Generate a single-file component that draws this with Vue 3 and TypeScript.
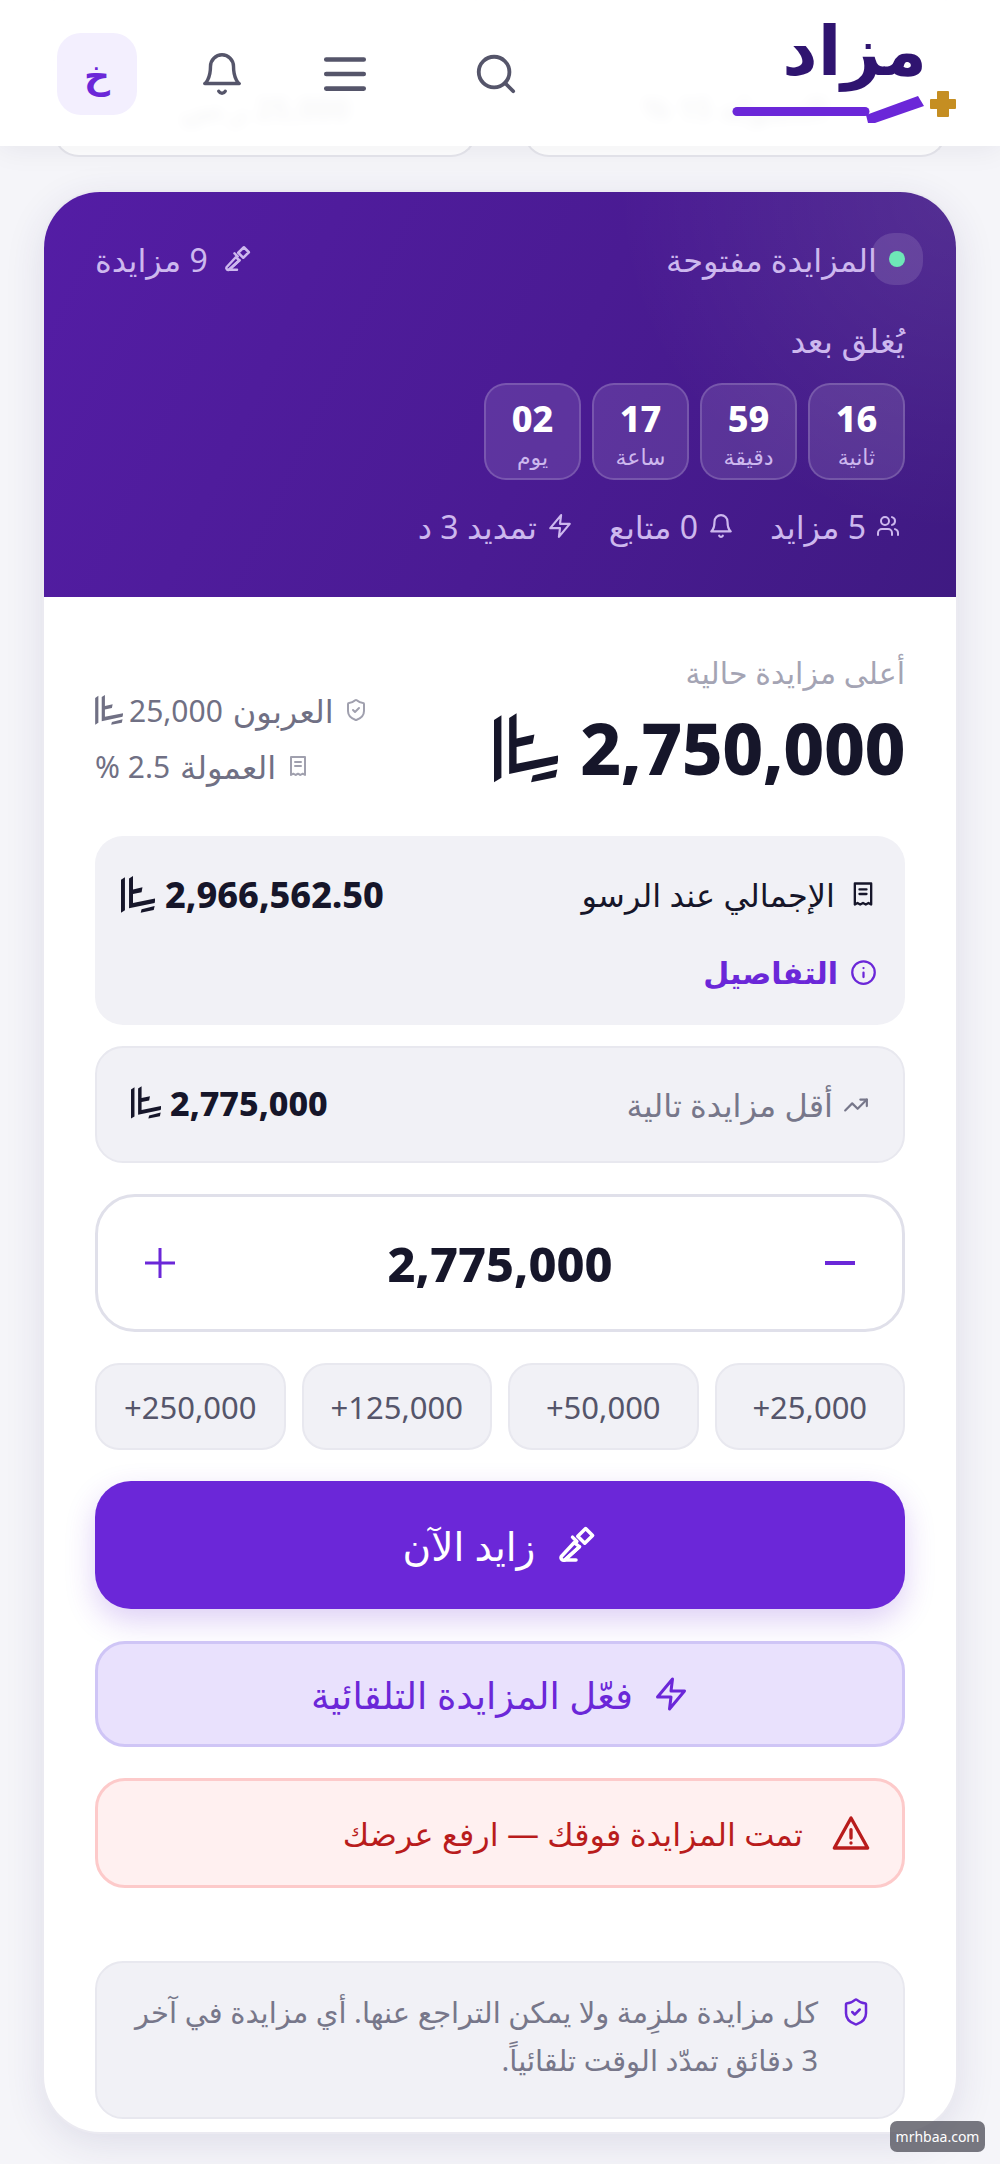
<script setup lang="ts">
const timers = [
  { v: '16', l: 'ثانية' },
  { v: '59', l: 'دقيقة' },
  { v: '17', l: 'ساعة' },
  { v: '02', l: 'يوم' },
]
const chips = ['+25,000', '+50,000', '+125,000', '+250,000']
</script>

<template>
  <div class="page" dir="rtl">
    <svg width="0" height="0" class="defs" aria-hidden="true">
      <symbol id="riyal" viewBox="30 30 190 206">
        <path d="M52 36 30 50v185l22-14z" />
        <path d="M97 30 75 44v166l143-30 5-25-126 25v-50l48-10 5-27-53 12z" />
        <path d="M145 215l73-18-5 23-73 15z" />
      </symbol>
      <symbol id="gavel" viewBox="0 0 24 24">
        <path d="m14 13-8.4 7.6H12" />
        <path d="M5.6 20.6c-1.400.4-2.600-.7-2-2L11 10.600l3 2.400z" />
        <path d="M12.500 10 10 7.500" />
        <path d="m17.500 2.600 4 4-4.500 4.400-4-4z" />
      </symbol>
      <symbol id="bell" viewBox="0 0 24 24">
        <path d="M6 8a6 6 0 0 1 12 0c0 7 3 9 3 9H3s3-2 3-9" />
        <path d="M10.300 21a1.940 1.940 0 0 0 3.400 0" />
      </symbol>
      <symbol id="zap" viewBox="0 0 24 24"><path d="M13 2 3 14h9l-1 8 10-12h-9l1-8z" /></symbol>
      <symbol id="receipt" viewBox="0 0 24 24">
        <path d="M5 3h14v18l-2.300-1.300-2.300 1.300-2.400-1.300-2.400 1.300-2.300-1.300L5 21z" />
        <path d="M9 8h6M9 12h6" />
      </symbol>
      <symbol id="shield" viewBox="0 0 24 24">
        <path d="M20 13c0 5-3.500 7.500-7.660 8.950a1 1 0 0 1-.67-.01C7.500 20.500 4 18 4 13V6a1 1 0 0 1 1-1c2 0 4.500-1.200 6.240-2.720a1.170 1.170 0 0 1 1.520 0C14.510 3.810 17 5 19 5a1 1 0 0 1 1 1z" />
        <path d="m9 12 2 2 4-4" />
      </symbol>
    </svg>

    <div class="under">
      <div class="under-card"><span>العمولة 15 %</span></div>
      <div class="under-card"><span>25,000 ر.س</span></div>
    </div>

    <header class="top">
      <div class="logo">
        <span class="logo-word">مزاد</span>
        <svg class="logo-mark" width="230" height="38" viewBox="730 88 230 38">
          <path d="M737 111.500h128" stroke="#6b27d8" stroke-width="9" stroke-linecap="round" />
          <path d="M866 115l52-19 6 10-49 17h-7z" fill="#6b27d8" />
          <path d="M938 92h10v8h7v8h-7v8h-10v-8h-7v-8h7z" fill="#c58e22" stroke="#c58e22" stroke-linejoin="round" stroke-width="2" />
        </svg>
      </div>
      <div class="top-actions">
        <svg class="ico search" viewBox="0 0 24 24"><circle cx="11" cy="11" r="8" /><path d="m21 21-4.300-4.300" /></svg>
        <svg class="ico menu" viewBox="0 0 24 24"><path d="M3 5h18M3 12h18M3 19h18" /></svg>
        <svg class="ico bell-top"><use href="#bell" /></svg>
        <div class="avatar">خ</div>
      </div>
    </header>

    <main class="card">
      <section class="hero">
        <div class="hero-top">
          <span class="live"><i class="dot"></i>المزايدة مفتوحة</span>
          <span class="count"><svg class="ico s30"><use href="#gavel" /></svg>9 مزايدة</span>
        </div>
        <div class="closes">يُغلق بعد</div>
        <div class="timers">
          <div v-for="t in timers" :key="t.l" class="timer">
            <b>{{ t.v }}</b>
            <span>{{ t.l }}</span>
          </div>
        </div>
        <div class="stats">
          <span>
            <svg class="ico s24" viewBox="0 0 24 24"><path d="M16 21v-2a4 4 0 0 0-4-4H6a4 4 0 0 0-4 4v2" /><circle cx="9" cy="7" r="4" /><path d="M22 21v-2a4 4 0 0 0-3-3.870" /><path d="M16 3.130a4 4 0 0 1 0 7.750" /></svg>
            5 مزايد
          </span>
          <span><svg class="ico s26"><use href="#bell" /></svg>0 متابع</span>
          <span><svg class="ico s26"><use href="#zap" /></svg>تمديد 3 د</span>
        </div>
      </section>

      <section class="body">
        <div class="price-row">
          <div class="price-main">
            <div class="price-label">أعلى مزايدة حالية</div>
            <div class="price">
              <span>2,750,000</span>
              <svg class="riyal r-big"><use href="#riyal" /></svg>
            </div>
          </div>
          <div class="price-side">
            <div class="side-line">
              <svg class="ico s24 pale"><use href="#shield" /></svg>
              <span class="side-label">العربون</span>
              <span class="num">25,000</span>
              <svg class="riyal r-side"><use href="#riyal" /></svg>
            </div>
            <div class="side-line">
              <svg class="ico s24 pale"><use href="#receipt" /></svg>
              <span class="side-label">العمولة</span>
              <span class="num">2.5 %</span>
            </div>
          </div>
        </div>

        <div class="total">
          <div class="total-row">
            <span class="total-label"><svg class="ico s28"><use href="#receipt" /></svg>الإجمالي عند الرسو</span>
            <span class="total-val">2,966,562.50<svg class="riyal r-mid"><use href="#riyal" /></svg></span>
          </div>
          <div class="details">
            <svg class="ico s27" viewBox="0 0 24 24"><circle cx="12" cy="12" r="10" /><path d="M12 16v-4M12 8h.01" /></svg>
            التفاصيل
          </div>
        </div>

        <div class="next">
          <span class="next-label">
            <svg class="ico s26" viewBox="0 0 24 24"><path d="M22 7l-8.500 8.500-5-5L2 17" /><path d="M16 7h6v6" /></svg>
            أقل مزايدة تالية
          </span>
          <span class="next-val">2,775,000<svg class="riyal r-next"><use href="#riyal" /></svg></span>
        </div>

        <div class="stepper">
          <svg class="ico step minus" viewBox="0 0 32 32"><path d="M1 16h30" /></svg>
          <b>2,775,000</b>
          <svg class="ico step" viewBox="0 0 32 32"><path d="M1 16h30M16 1v30" /></svg>
        </div>

        <div class="chips">
          <div v-for="c in chips" :key="c" class="chip" dir="ltr">{{ c }}</div>
        </div>

        <div class="bid"><svg class="ico s42"><use href="#gavel" /></svg>زايد الآن</div>

        <div class="auto"><svg class="ico s36"><use href="#zap" /></svg>فعّل المزايدة التلقائية</div>

        <div class="alert">
          <svg class="ico s40" viewBox="0 0 24 24"><path d="M12 3 2 21h20z" /><path d="M12 10v5M12 18h.01" /></svg>
          تمت المزايدة فوقك — ارفع عرضك
        </div>

        <div class="note">
          <svg class="ico s30"><use href="#shield" /></svg>
          <p>كل مزايدة ملزِمة ولا يمكن التراجع عنها. أي مزايدة في آخر 3 دقائق تمدّد الوقت تلقائياً.</p>
        </div>
      </section>
    </main>

    <div class="mark" dir="ltr">mrhbaa.com</div>
  </div>
</template>

<style>
html, body { margin: 0; background: #f5f5f9; }
</style>

<style scoped>
.page {
  position: relative;
  width: 1000px;
  height: 2164px;
  overflow: hidden;
  background: #f5f5f9;
  font-family: "Noto Sans", "DejaVu Sans", sans-serif;
  color: #16162a;
}
.defs { position: absolute; }
.ico {
  fill: none;
  stroke: currentColor;
  stroke-width: 2;
  stroke-linecap: round;
  stroke-linejoin: round;
  flex: none;
}
.riyal { fill: currentColor; flex: none; }

.under {
  display: flex;
  gap: 46px;
  height: 157px;
  padding: 0 53px;
  box-sizing: border-box;
}
.under-card {
  flex: 1;
  background: #fff;
  border: 2px solid #e6e6ec;
  border-top: 0;
  border-radius: 0 0 26px 26px;
  display: flex;
  justify-content: center;
  padding-top: 88px;
  font-size: 30px;
  font-weight: 700;
  color: #6f6f80;
  box-sizing: border-box;
}
.top {
  position: absolute;
  inset: 0 0 auto 0;
  height: 146px;
  display: flex;
  justify-content: space-between;
  box-sizing: border-box;
  background: rgba(255, 255, 255, 0.94);
  backdrop-filter: blur(6px);
  box-shadow: 0 2px 28px rgba(30, 30, 60, 0.07);
}
.logo {
  position: relative;
  width: 270px;
  margin-right: 40px;
}
.logo-word {
  position: absolute;
  top: 13px;
  right: 33px;
  font-size: 69px;
  font-weight: 700;
  line-height: 70px;
  color: #2f1470;
}
.logo-mark {
  position: absolute;
  top: 88px;
  right: 0;
}
.top-actions {
  display: flex;
  align-items: center;
  margin-left: 57px;
  color: #55556a;
  height: 148px;
}
.search { width: 46px; height: 46px; margin-left: 103px; stroke-width: 2; }
.menu { width: 50px; height: 50px; margin-left: 75px; stroke-width: 2.200; }
.bell-top { width: 46px; height: 46px; margin-left: 62px; stroke-width: 1.800; }
.avatar {
  width: 80px;
  height: 82px;
  border-radius: 24px;
  background: #f3effe;
  color: #6b27d8;
  font-size: 36px;
  font-weight: 700;
  display: flex;
  align-items: center;
  justify-content: center;
}

.card {
  width: 912px;
  margin: 35px auto 0;
  height: 1940px;
  background: #fff;
  border-radius: 56px;
  overflow: hidden;
  box-shadow: 0 0 0 2px #ebeaf1, 0 10px 40px rgba(50, 40, 110, 0.12);
}
.hero {
  height: 405px;
  box-sizing: border-box;
  padding: 50px 51px 0;
  color: #cdb8ee;
  background:
    radial-gradient(circle at 100% 0, rgba(255, 255, 255, 0.09), transparent 340px),
    linear-gradient(115deg, #541da5, #4a1b93 55%, #3f1a82);
}
.hero-top {
  display: flex;
  justify-content: space-between;
  align-items: center;
  height: 34px;
  font-size: 32px;
}
.live, .count, .stats span { display: flex; align-items: center; }
.live { gap: 12px; }
.count { gap: 14px; }
.dot {
  width: 16px;
  height: 16px;
  border-radius: 50%;
  background: #6ee7b7;
  box-shadow: 0 0 0 18px rgba(255, 255, 255, 0.12);
}
.closes {
  margin-top: 48px;
  height: 34px;
  line-height: 34px;
  font-size: 33px;
}
.timers {
  display: flex;
  gap: 11px;
  margin-top: 25px;
}
.timer {
  width: 97px;
  height: 97px;
  box-sizing: border-box;
  border-radius: 22px;
  border: 2px solid rgba(255, 255, 255, 0.17);
  background: rgba(255, 255, 255, 0.11);
  display: flex;
  flex-direction: column;
  align-items: center;
  padding-top: 9px;
}
.timer b {
  font-size: 36px;
  line-height: 49px;
  font-weight: 800;
  color: #fff;
}
.timer span {
  font-size: 22px;
  line-height: 27px;
}
.stats {
  display: flex;
  gap: 36px;
  margin-top: 29px;
  padding-right: 5px;
  height: 34px;
  font-size: 32px;
}
.stats span { gap: 10px; }
.s24 { width: 24px; height: 24px; }
.s26 { width: 26px; height: 26px; }
.s27 { width: 27px; height: 27px; }
.s28 { width: 28px; height: 28px; }
.s30 { width: 30px; height: 30px; }
.s36 { width: 36px; height: 36px; }
.s40 { width: 40px; height: 40px; }
.s42 { width: 42px; height: 42px; }

.body { padding: 0 51px; }
.price-row {
  display: flex;
  justify-content: space-between;
  height: 239px;
  box-sizing: border-box;
  padding-top: 58px;
}
.price-label {
  font-size: 30px;
  line-height: 36px;
  color: #a4a4b4;
}
.price {
  display: flex;
  align-items: center;
  gap: 22px;
  margin-top: 19px;
  font-size: 71px;
  line-height: 76px;
  font-weight: 800;
  letter-spacing: -0.5px;
}
.r-big { width: 64px; height: 70px; }
.price-side {
  padding-top: 38px;
  color: #707084;
  font-size: 30px;
  display: flex;
  flex-direction: column;
  align-items: flex-end;
}
.side-line {
  display: flex;
  align-items: center;
  gap: 10px;
  height: 34px;
  margin-bottom: 22px;
}
.side-label { font-size: 32px; }
.pale { color: #a0a0ae; }
.r-side { width: 28px; height: 30px; margin-right: -4px; }

.total {
  height: 189px;
  box-sizing: border-box;
  background: #f1f1f6;
  border-radius: 28px;
  padding: 38px 28px 0 26px;
}
.total-row {
  display: flex;
  justify-content: space-between;
  align-items: center;
  height: 40px;
}
.total-label {
  display: flex;
  align-items: center;
  gap: 14px;
  font-size: 32px;
}
.total-val, .next-val {
  display: flex;
  align-items: center;
  gap: 10px;
  font-size: 36px;
  font-weight: 800;
}
.next-val { font-size: 34px; gap: 9px; padding-bottom: 4px; }
.r-mid { width: 34px; height: 37px; }
.r-next { width: 30px; height: 33px; }
.details {
  display: flex;
  align-items: center;
  gap: 12px;
  margin-top: 38px;
  font-size: 30px;
  font-weight: 700;
  color: #6b27d8;
}
.next {
  height: 117px;
  box-sizing: border-box;
  margin-top: 21px;
  padding: 0 34px 0 34px;
  border: 2px solid #e8e8ef;
  border-radius: 28px;
  background: #f1f1f6;
  display: flex;
  justify-content: space-between;
  align-items: center;
}
.next-label {
  display: flex;
  align-items: center;
  gap: 10px;
  font-size: 32px;
  color: #77778a;
}
.stepper {
  height: 138px;
  box-sizing: border-box;
  margin-top: 31px;
  padding: 0 46px;
  border: 3px solid #e0e0ea;
  border-radius: 40px;
  display: flex;
  justify-content: space-between;
  align-items: center;
}
.stepper b {
  font-size: 48.500px;
  font-weight: 800;
}
.step {
  width: 32px;
  height: 32px;
  color: #6b27d8;
  stroke-width: 3;
  stroke-linecap: butt;
}
.minus { stroke-width: 4; }
.chips {
  display: grid;
  grid-template-columns: repeat(4, 1fr);
  gap: 16px;
  margin-top: 31px;
}
.chip {
  height: 87px;
  box-sizing: border-box;
  border: 2px solid #e8e8ef;
  border-radius: 24px;
  background: #f1f1f6;
  display: flex;
  align-items: center;
  justify-content: center;
  font-size: 31px;
  color: #55556a;
}
.bid {
  height: 128px;
  margin-top: 31px;
  border-radius: 36px;
  background: #6b27d8;
  color: #fff;
  display: flex;
  align-items: center;
  justify-content: center;
  gap: 20px;
  font-size: 39px;
  box-shadow: 0 12px 30px rgba(107, 39, 216, 0.22);
}
.auto {
  height: 106px;
  box-sizing: border-box;
  margin-top: 32px;
  border: 3px solid #cfc5f6;
  border-radius: 30px;
  background: #e9e1fd;
  color: #6b27d8;
  display: flex;
  align-items: center;
  justify-content: center;
  gap: 20px;
  font-size: 37px;
}
.alert {
  height: 110px;
  box-sizing: border-box;
  margin-top: 31px;
  padding-right: 31px;
  border: 3px solid #fdcaca;
  border-radius: 30px;
  background: #fff0f0;
  color: #b91c1c;
  display: flex;
  align-items: center;
  gap: 28px;
  font-size: 32px;
}
.note {
  height: 158px;
  box-sizing: border-box;
  margin-top: 73px;
  padding: 25px 32px 0 30px;
  border: 2px solid #e8e8ef;
  border-radius: 28px;
  background: #f1f1f6;
  display: flex;
  gap: 23px;
  color: #77778a;
}
.note .ico { color: #6b27d8; margin-top: 9px; }
.note p {
  margin: 0;
  font-size: 29px;
  line-height: 48px;
}
.mark {
  position: absolute;
  left: 890px;
  top: 2121px;
  width: 95px;
  height: 31px;
  border-radius: 7px;
  background: rgba(90, 90, 100, 0.82);
  color: #fff;
  font-size: 14px;
  display: flex;
  align-items: center;
  justify-content: center;
}
</style>
